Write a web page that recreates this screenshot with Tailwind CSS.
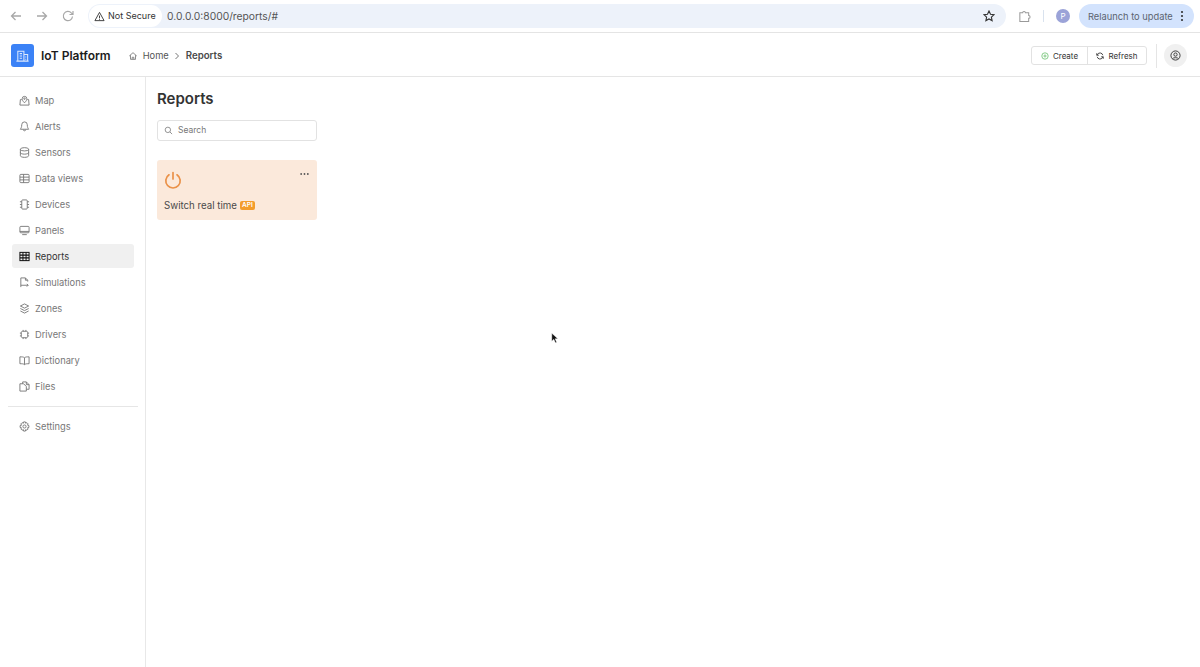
<!DOCTYPE html>
<html lang="en">
<head>
    <meta charset="UTF-8">
    <title>IoT Platform - Reports</title>
    <script src="https://cdn.jsdelivr.net/npm/@tailwindcss/browser@4"></script>
</head>
<body class="relative w-[1200px] h-[667px] overflow-hidden bg-white font-['Inter',sans-serif] text-[#3a3a3a]">

    <!-- browser chrome -->
    <div class="h-[33px] flex items-center pl-[8px] pr-[5px] border-b border-[#e4e4e4] bg-white">
        <div class="w-[16px] h-[16px] text-[#a8a8a8]">
            <svg viewBox="0 0 16 16" class="w-[16px] h-[16px]" fill="none" stroke="currentColor" stroke-width="1.3"><path d="M13 8H3.500M7.500 4L3.500 8l4 4"/></svg>
        </div>
        <div class="w-[16px] h-[16px] ml-[10px] text-[#a8a8a8]">
            <svg viewBox="0 0 16 16" class="w-[16px] h-[16px]" fill="none" stroke="currentColor" stroke-width="1.3"><path d="M3 8h9.500M8.500 4l4 4-4 4"/></svg>
        </div>
        <div class="w-[16px] h-[16px] ml-[10px] text-[#a8a8a8]">
            <svg viewBox="0 0 16 16" class="w-[16px] h-[16px]" fill="none" stroke="currentColor" stroke-width="1.200"><path d="M12.500 8.500a4.600 4.600 0 1 1-1.200-3.600L13 6.500M13 3v3.500H9.500"/></svg>
        </div>
        <div class="ml-[12px] w-[918px] h-[24px] rounded-full bg-[#edf2fa] flex items-center pl-[1px] pr-[11px]">
            <div class="h-[22px] w-[73px] rounded-full bg-white flex items-center pl-[5px] gap-[3px] text-[9px] text-[#333] whitespace-nowrap shrink-0">
                <svg viewBox="0 0 12 12" class="w-[11px] h-[11px] shrink-0" fill="none" stroke="#333" stroke-width="1"><path d="M6 1.500L11 10.500H1Z"/><path d="M6 5v3M6 8.800v.8"/></svg>
                <span>Not Secure</span>
            </div>
            <span class="ml-[5px] text-[10.300px] leading-[15px] pt-[1px] text-[#555]">0.0.0.0:8000/reports/#</span>
            <svg viewBox="0 0 12 12" class="ml-auto w-[12px] h-[12px]" fill="none" stroke="#333" stroke-width="1.100"><path d="M6 1l1.500 3.300 3.500.4-2.600 2.400.7 3.500L6 8.900l-3.100 1.700.7-3.500L1 4.700l3.500-.4z"/></svg>
        </div>
        <svg viewBox="0 0 14 14" class="ml-[12px] w-[13px] h-[13px]" fill="none" stroke="#999" stroke-width="1.100"><path d="M2 3h3a1.500 1.500 0 0 1 3 0h3.500v3a1.500 1.500 0 0 1 0 3V12.500H2z"/></svg>
        <div class="ml-[12px] w-px h-[12px] bg-[#d9e2ee]"></div>
        <div class="ml-[12px] w-[14px] h-[14px] rounded-full bg-[#9ba3d8] text-white text-[8px] flex items-center justify-center">P</div>
        <div class="ml-[9px] w-[115px] h-[24px] rounded-full bg-[#d3e3fd] flex items-center pl-[9px] text-[9.300px] text-[#5c6470] whitespace-nowrap">
            <span class="pt-[1px] leading-[14px]">Relaunch to update</span>
            <svg viewBox="0 0 4 12" class="ml-[7px] w-[4px] h-[12px]" fill="#333"><circle cx="2" cy="2" r="1.100"/><circle cx="2" cy="6" r="1.100"/><circle cx="2" cy="10" r="1.100"/></svg>
        </div>
    </div>

    <!-- app header -->
    <header class="h-[44px] flex items-center pt-[2px] pl-[11px] pr-[13px] border-b border-[#e5e5e5]">
        <div class="w-[23px] h-[23px] rounded-[3px] bg-[#3b82f6] flex items-center justify-center">
            <svg viewBox="0 0 16 16" class="w-[15px] h-[15px]" fill="none" stroke="#dbe8fd" stroke-width="1.100"><path d="M3 14V3.500h6.500V14M9.500 7H13.500V14M1.500 14h13M5 6h2.500M5 8.500h2.500M5 11h2.500M11 9.500h1M11 12h1"/></svg>
        </div>
        <span class="ml-[7px] text-[12px] font-semibold text-[#1c1c1c] whitespace-nowrap">IoT Platform</span>
        <svg viewBox="0 0 12 12" class="ml-[17px] w-[10px] h-[10px]" fill="none" stroke="#777" stroke-width="1"><path d="M1.500 6L6 2l4.500 4M3 5v5h6V5M5 10V7.500h2V10"/></svg>
        <span class="ml-[5px] text-[9.300px] leading-[14px] text-[#555]">Home</span>
        <svg viewBox="0 0 8 8" class="ml-[4px] w-[8px] h-[8px]" fill="none" stroke="#777" stroke-width="1"><path d="M2.500 1l3 3-3 3"/></svg>
        <span class="ml-[5px] text-[9.700px] leading-[14px] font-semibold text-[#4a4a4a]">Reports</span>
        <div class="ml-auto flex h-[19px] border border-[#e2e2e2] rounded-[3px] text-[8px] text-[#333]">
            <div class="w-[56px] flex items-center justify-center gap-[4px] border-r border-[#e2e2e2]">
                <svg viewBox="0 0 10 10" class="w-[8px] h-[8px]" fill="none" stroke="#6cc070" stroke-width="1"><circle cx="5" cy="5" r="4"/><path d="M5 3v4M3 5h4"/></svg>
                Create
            </div>
            <div class="w-[58px] flex items-center justify-center gap-[4px]">
                <svg viewBox="0 0 10 10" class="w-[8px] h-[8px]" fill="none" stroke="#333" stroke-width="1.100"><path d="M8.500 4A3.600 3.600 0 0 0 2 2.800L1 4M1.500 6A3.600 3.600 0 0 0 8 7.200L9 6M1 1.500V4h2.500M9 8.500V6H6.500"/></svg>
                Refresh
            </div>
        </div>
        <div class="ml-[9px] w-px h-[24px] bg-[#e5e5e5]"></div>
        <div class="ml-[7px] w-[23px] h-[23px] rounded-full bg-[#f0f0f0] flex items-center justify-center">
            <svg viewBox="0 0 12 12" class="w-[11px] h-[11px]" fill="none" stroke="#333" stroke-width="1"><circle cx="6" cy="6" r="5"/><circle cx="6" cy="5" r="1.800"/><path d="M2.800 9.500C3.500 8 8.500 8 9.200 9.500"/></svg>
        </div>
    </header>

    <div class="flex h-[590px]">
        <!-- sidebar -->
        <aside class="w-[146px] shrink-0 border-r border-[#e8e8e8] pt-[10px] pl-[12px] pr-[11px] text-[9.300px] leading-[15px] text-[#777]">
            <nav class="flex flex-col">
                <a class="h-[26px] flex items-center pl-[7px] gap-[5px]"><svg viewBox="0 0 12 12" class="w-[11px] h-[11px] shrink-0" fill="none" stroke="#777" stroke-width="1"><path d="M3 5H1.500L1 11h10l-.5-6H9"/><path d="M6 8.500C4 6.500 3.500 5.500 3.500 4a2.500 2.500 0 0 1 5 0c0 1.500-.5 2.500-2.500 4.500z"/><circle cx="6" cy="4" r=".8"/></svg>Map</a>
                <a class="h-[26px] flex items-center pl-[7px] gap-[5px]"><svg viewBox="0 0 12 12" class="w-[11px] h-[11px] shrink-0" fill="none" stroke="#777" stroke-width="1"><path d="M6 1a3 3 0 0 0-3 3c0 3-1 4-1.500 5h9C10 8 9 7 9 4a3 3 0 0 0-3-3zM4.800 9.500a1.200 1.200 0 0 0 2.400 0"/></svg>Alerts</a>
                <a class="h-[26px] flex items-center pl-[7px] gap-[5px]"><svg viewBox="0 0 12 12" class="w-[11px] h-[11px] shrink-0" fill="none" stroke="#777" stroke-width="1"><ellipse cx="6" cy="2.500" rx="4.500" ry="1.800"/><path d="M1.500 2.500v7c0 1 2 1.800 4.500 1.800s4.500-.8 4.500-1.800v-7M1.500 6c0 1 2 1.800 4.500 1.800S10.500 7 10.500 6"/></svg>Sensors</a>
                <a class="h-[26px] flex items-center pl-[7px] gap-[5px]"><svg viewBox="0 0 12 12" class="w-[11px] h-[11px] shrink-0" fill="none" stroke="#777" stroke-width="1"><rect x="1" y="1.500" width="10" height="9" rx="1"/><path d="M1 4.500h10M1 7.500h10M5 1.500v9"/></svg>Data views</a>
                <a class="h-[26px] flex items-center pl-[7px] gap-[5px]"><svg viewBox="0 0 12 12" class="w-[11px] h-[11px] shrink-0" fill="none" stroke="#777" stroke-width="1"><rect x="3" y="1" width="6" height="10" rx="1"/><path d="M1 3h2M1 6h2M1 9h2M9 3h2M9 6h2M9 9h2"/></svg>Devices</a>
                <a class="h-[26px] flex items-center pl-[7px] gap-[5px]"><svg viewBox="0 0 12 12" class="w-[11px] h-[11px] shrink-0" fill="none" stroke="#777" stroke-width="1"><rect x="1" y="1.500" width="10" height="7" rx="1"/><path d="M1 7h10M3.500 10.500h5" /></svg>Panels</a>
                <a class="h-[24px] my-[1px] flex items-center pl-[7px] gap-[5px] rounded-[3px] bg-[#f0f0f0] text-[#333]"><svg viewBox="0 0 12 12" class="w-[11px] h-[11px] shrink-0" fill="none" stroke="#111" stroke-width="1.100"><rect x="1" y="1.500" width="10" height="9"/><path d="M1 4.500h10M1 7.500h10M4.300 1.500v9M7.700 1.500v9"/></svg>Reports</a>
                <a class="h-[26px] flex items-center pl-[7px] gap-[5px]"><svg viewBox="0 0 12 12" class="w-[11px] h-[11px] shrink-0" fill="none" stroke="#777" stroke-width="1"><path d="M2 11V1h5l2.500 2.500V5M7 1v2.500h2.500M2 9h8M8.500 7.500L10 9l-1.500 1.500"/></svg>Simulations</a>
                <a class="h-[26px] flex items-center pl-[7px] gap-[5px]"><svg viewBox="0 0 12 12" class="w-[11px] h-[11px] shrink-0" fill="none" stroke="#777" stroke-width="1"><path d="M6 1l4.500 2.300L6 5.600 1.500 3.300zM1.500 6L6 8.300 10.500 6M1.500 8.700L6 11l4.500-2.300"/></svg>Zones</a>
                <a class="h-[26px] flex items-center pl-[7px] gap-[5px]"><svg viewBox="0 0 12 12" class="w-[11px] h-[11px] shrink-0" fill="none" stroke="#777" stroke-width="1"><rect x="2.500" y="2.500" width="7" height="7" rx="1.500"/><path d="M4.500 1v1.500M7.500 1v1.500M4.500 9.500V11M7.500 9.500V11M1 4.500h1.500M1 7.500h1.500M9.500 4.500H11M9.500 7.500H11"/></svg>Drivers</a>
                <a class="h-[26px] flex items-center pl-[7px] gap-[5px]"><svg viewBox="0 0 12 12" class="w-[11px] h-[11px] shrink-0" fill="none" stroke="#777" stroke-width="1"><path d="M6 3C5 2 3 2 1 2v7.500c2 0 4 0 5 1 1-1 3-1 5-1V2C9 2 7 2 6 3zM6 3v7.500"/></svg>Dictionary</a>
                <a class="h-[26px] flex items-center pl-[7px] gap-[5px]"><svg viewBox="0 0 12 12" class="w-[11px] h-[11px] shrink-0" fill="none" stroke="#777" stroke-width="1"><path d="M4 3V1h4l3 3v5H8M1 3h4l3 3v5H1zM8 1v3h3"/></svg>Files</a>
            </nav>
            <div class="mt-[7px] -mx-[4px] border-t border-[#e6e6e6]"></div>
            <a class="mt-[6px] h-[26px] flex items-center pl-[7px] gap-[5px]"><svg viewBox="0 0 12 12" class="w-[11px] h-[11px] shrink-0" fill="none" stroke="#777" stroke-width="1"><circle cx="6" cy="6" r="1.700"/><path d="M5 1h2l.3 1.500 1.300-.7 1.400 1.400-.8 1.300L10.800 5v2l-1.600.4.800 1.300-1.400 1.400-1.300-.8L7 11H5l-.3-1.700-1.300.8L2 8.700l.8-1.300L1.200 7V5l1.600-.4L2 3.200l1.400-1.400 1.300.7z"/></svg>Settings</a>
        </aside>

        <!-- main -->
        <main class="flex-1 pl-[11px] pt-[13px]">
            <h1 class="text-[15px] leading-[18px] font-semibold text-[#333]">Reports</h1>
            <div class="mt-[12px] w-[160px] h-[21px] border border-[#e2e2e2] rounded-[3px] flex items-center pl-[6px] gap-[5px] text-[8.500px] text-[#777]">
                <svg viewBox="0 0 10 10" class="w-[9px] h-[9px]" fill="none" stroke="#888" stroke-width="1"><circle cx="4.300" cy="4.300" r="3"/><path d="M6.500 6.500L9 9"/></svg>
                Search
            </div>
            <div class="relative mt-[19px] w-[160px] h-[60px] rounded-[3px] bg-[#fbe9db] pt-[11px] pl-[7px]">
                <svg viewBox="0 0 18 18" class="w-[18px] h-[18px]" fill="none" stroke="#ea9148" stroke-width="1.700" stroke-linecap="round"><path d="M9 1.500v6.500M5 3.800a7.200 7.200 0 1 0 8 0"/></svg>
                <div class="mt-[10px] flex items-center text-[9.700px] leading-[13px] text-[#4a4a4a] whitespace-nowrap">
                    Switch real time
                    <span class="ml-[3px] h-[9px] w-[15px] text-center rounded-[2px] bg-[#f39c2b] text-white text-[6.500px] leading-[9px] font-semibold">API</span>
                </div>
                <svg viewBox="0 0 10 4" class="absolute top-[12px] right-[8px] w-[9px] h-[4px]" fill="#555"><circle cx="1.300" cy="2" r="1"/><circle cx="5" cy="2" r="1"/><circle cx="8.700" cy="2" r="1"/></svg>
            </div>
        </main>
    </div>

    <!-- mouse pointer from the capture -->
    <svg viewBox="0 0 10 14" class="absolute left-[551px] top-[332px] w-[8px] h-[12px]" fill="#111" stroke="#fff" stroke-width="0.500"><path d="M1 1v10l2.500-2.300L5.500 13l1.600-.8-2-4.200H8.500z"/></svg>
</body>
</html>
